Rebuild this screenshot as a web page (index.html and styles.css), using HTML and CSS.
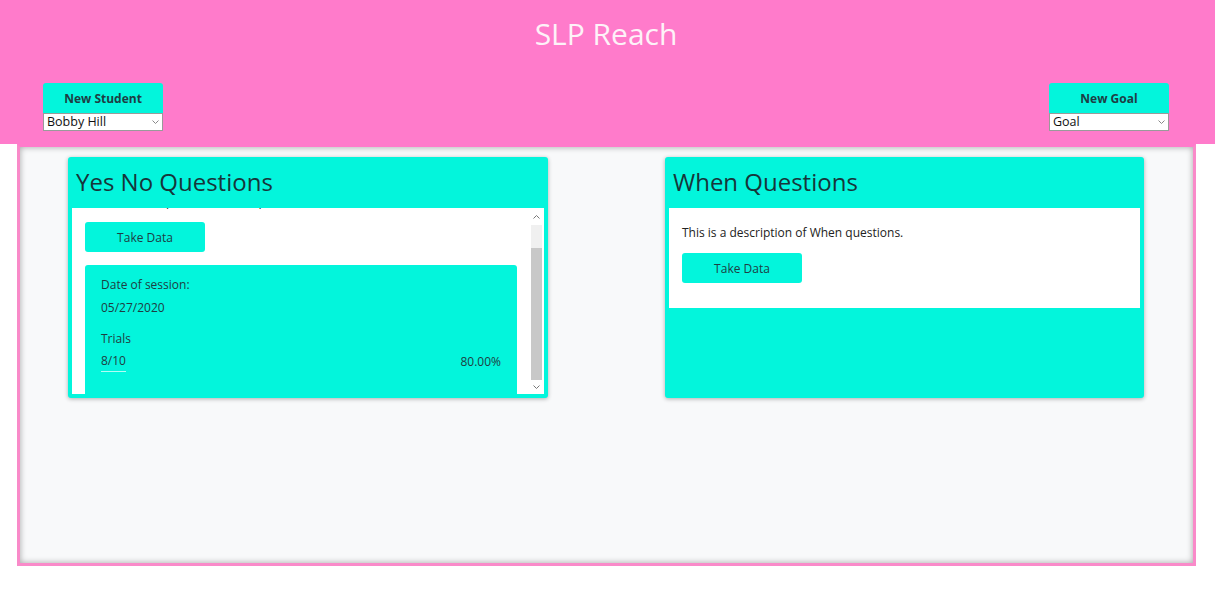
FILE: index.html
```html
<!DOCTYPE html>
<html lang="en">
<head>
<meta charset="utf-8">
<title>SLP Reach</title>
<link rel="stylesheet" href="styles.css">
</head>
<body>
<header class="topbar">
  <h1 class="brand">SLP Reach</h1>
  <div class="controls">
    <div class="picker">
      <button class="picker-btn" type="button">New Student</button>
      <div class="select-wrap">
        <select class="picker-select"><option>Bobby Hill</option></select>
        <svg class="chev" width="7" height="4" viewBox="0 0 7 4"><path d="M0.5 0.5 L3.5 3.5 L6.5 0.5" fill="none" stroke="#888" stroke-width="1"/></svg>
      </div>
    </div>
    <div class="picker">
      <button class="picker-btn" type="button">New Goal</button>
      <div class="select-wrap">
        <select class="picker-select"><option>Goal</option></select>
        <svg class="chev" width="7" height="4" viewBox="0 0 7 4"><path d="M0.5 0.5 L3.5 3.5 L6.5 0.5" fill="none" stroke="#888" stroke-width="1"/></svg>
      </div>
    </div>
  </div>
</header>

<main class="board">
  <section class="card">
    <h2 class="card-title">Yes No Questions</h2>
    <div class="card-body split">
      <div class="viewport">
        <div class="scroll-inner">
          <p class="desc">This is a description of Yes No questions.</p>
          <button class="take-btn" type="button">Take Data</button>
          <div class="session">
            <p class="s-label">Date of session:</p>
            <p class="s-value">05/27/2020</p>
            <p class="s-label gap">Trials</p>
            <div class="s-row">
              <span class="s-trials">8/10</span>
              <span class="s-pct">80.00%</span>
            </div>
          </div>
        </div>
      </div>
      <div class="scrollbar" aria-hidden="true">
        <div class="sb-btn sb-up">
          <svg width="7" height="4" viewBox="0 0 7 4"><path d="M0.5 3.5 L3.5 0.5 L6.5 3.5" fill="none" stroke="#777" stroke-width="1"/></svg>
        </div>
        <div class="sb-track"><div class="sb-thumb"></div></div>
        <div class="sb-btn sb-down">
          <svg width="7" height="4" viewBox="0 0 7 4"><path d="M0.5 0.5 L3.5 3.5 L6.5 0.5" fill="none" stroke="#777" stroke-width="1"/></svg>
        </div>
      </div>
    </div>
  </section>

  <section class="card narrow">
    <h2 class="card-title">When Questions</h2>
    <div class="card-body">
      <p class="desc">This is a description of When questions.</p>
      <button class="take-btn" type="button">Take Data</button>
    </div>
  </section>
</main>
</body>
</html>
```

FILE: styles.css
```css
* { box-sizing: border-box; }

body {
  margin: 0;
  background: #ffffff;
  font-family: "Open Sans", "Noto Sans", sans-serif;
  color: #212529;
}

.topbar {
  background: #ff7bcb;
  height: 144px;
  padding: 14px 46px 0 43px;
}

.brand {
  margin: 0;
  text-align: center;
  color: #fdf2f8;
  font-weight: 400;
  font-size: 30px;
  line-height: 40px;
}

.controls {
  margin-top: 29px;
  display: flex;
  justify-content: space-between;
}

.picker {
  width: 120px;
  display: flex;
  flex-direction: column;
}

.picker-btn {
  display: block;
  height: 30px;
  border: none;
  border-radius: 3px 3px 0 0;
  background: #03f5dc;
  color: #1e3d44;
  font-family: inherit;
  font-weight: 700;
  font-size: 12px;
  padding: 0;
  margin: 0;
}

.select-wrap {
  position: relative;
  height: 18px;
}

.picker-select {
  display: block;
  appearance: none;
  -webkit-appearance: none;
  width: 100%;
  height: 18px;
  border: 1px solid #9a9a9a;
  border-radius: 0;
  background: #ffffff;
  color: #111;
  font-family: inherit;
  font-size: 12.5px;
  line-height: 16px;
  padding: 0 0 0 3px;
  margin: 0;
}

.chev {
  position: absolute;
  right: 4px;
  top: 7px;
  pointer-events: none;
}

.board {
  width: 1179px;
  height: 422px;
  margin-left: 17px;
  border: 3px solid #f98ac9;
  border-top-color: #ff7bcb;
  background: #f8f9fa;
  box-shadow: inset 0 0 6px rgba(0, 0, 0, 0.35);
  padding: 10px 49px 0 48px;
  display: flex;
  justify-content: space-between;
  align-items: flex-start;
}

.card {
  width: 480px;
  height: 241px;
  background: #03f5dc;
  border-radius: 3px;
  box-shadow: 0 1px 4px rgba(0, 0, 0, 0.3);
  padding: 0 4px 4px;
  display: flex;
  flex-direction: column;
}

.card.narrow { width: 479px; }

.card-title {
  margin: 0;
  height: 51px;
  padding: 9px 0 0 4px;
  font-weight: 400;
  font-size: 24px;
  line-height: 32px;
  color: #17353a;
}

.card-body {
  background: #ffffff;
  padding: 14px 13px 25px;
}

.card-body.split {
  height: 186px;
  padding: 0;
  display: flex;
}

.viewport {
  flex: 1;
  overflow: hidden;
  display: flex;
  flex-direction: column-reverse;
}

.scroll-inner {
  padding: 14px 12px 0 13px;
  flex: none;
}

.desc {
  margin: 0 0 10px;
  font-size: 12px;
  line-height: 21px;
  color: #222;
}

.take-btn {
  display: block;
  width: 120px;
  height: 30px;
  border: none;
  border-radius: 3px;
  background: #03f5dc;
  color: #1e3d44;
  font-family: inherit;
  font-size: 12px;
  padding: 0;
}

.session {
  margin-top: 13px;
  background: #03f5dc;
  border-radius: 3px 3px 0 0;
  padding: 9px 16px 22px 16px;
  font-size: 12px;
  line-height: 21px;
  color: #1f3d42;
}

.session p { margin: 0; }
.s-value { margin-top: 2px !important; }
.gap { margin-top: 10px !important; }

.s-row {
  margin-top: 2px;
  display: flex;
  justify-content: space-between;
}

.s-trials {
  border-bottom: 1px solid rgba(255, 255, 255, 0.7);
  line-height: 20px;
}

.scrollbar {
  width: 15px;
  flex: none;
  display: flex;
  flex-direction: column;
  padding: 0 2px;
  background: #ffffff;
}

.sb-btn {
  display: flex;
  justify-content: center;
  align-items: center;
  flex: none;
}

.sb-up { height: 17px; }
.sb-down { height: 14px; }

.sb-track {
  flex: 1;
  background: #f0f0f0;
  display: flex;
  flex-direction: column;
  justify-content: flex-end;
}

.sb-thumb {
  height: 132px;
  background: #c8c8c8;
}
```
